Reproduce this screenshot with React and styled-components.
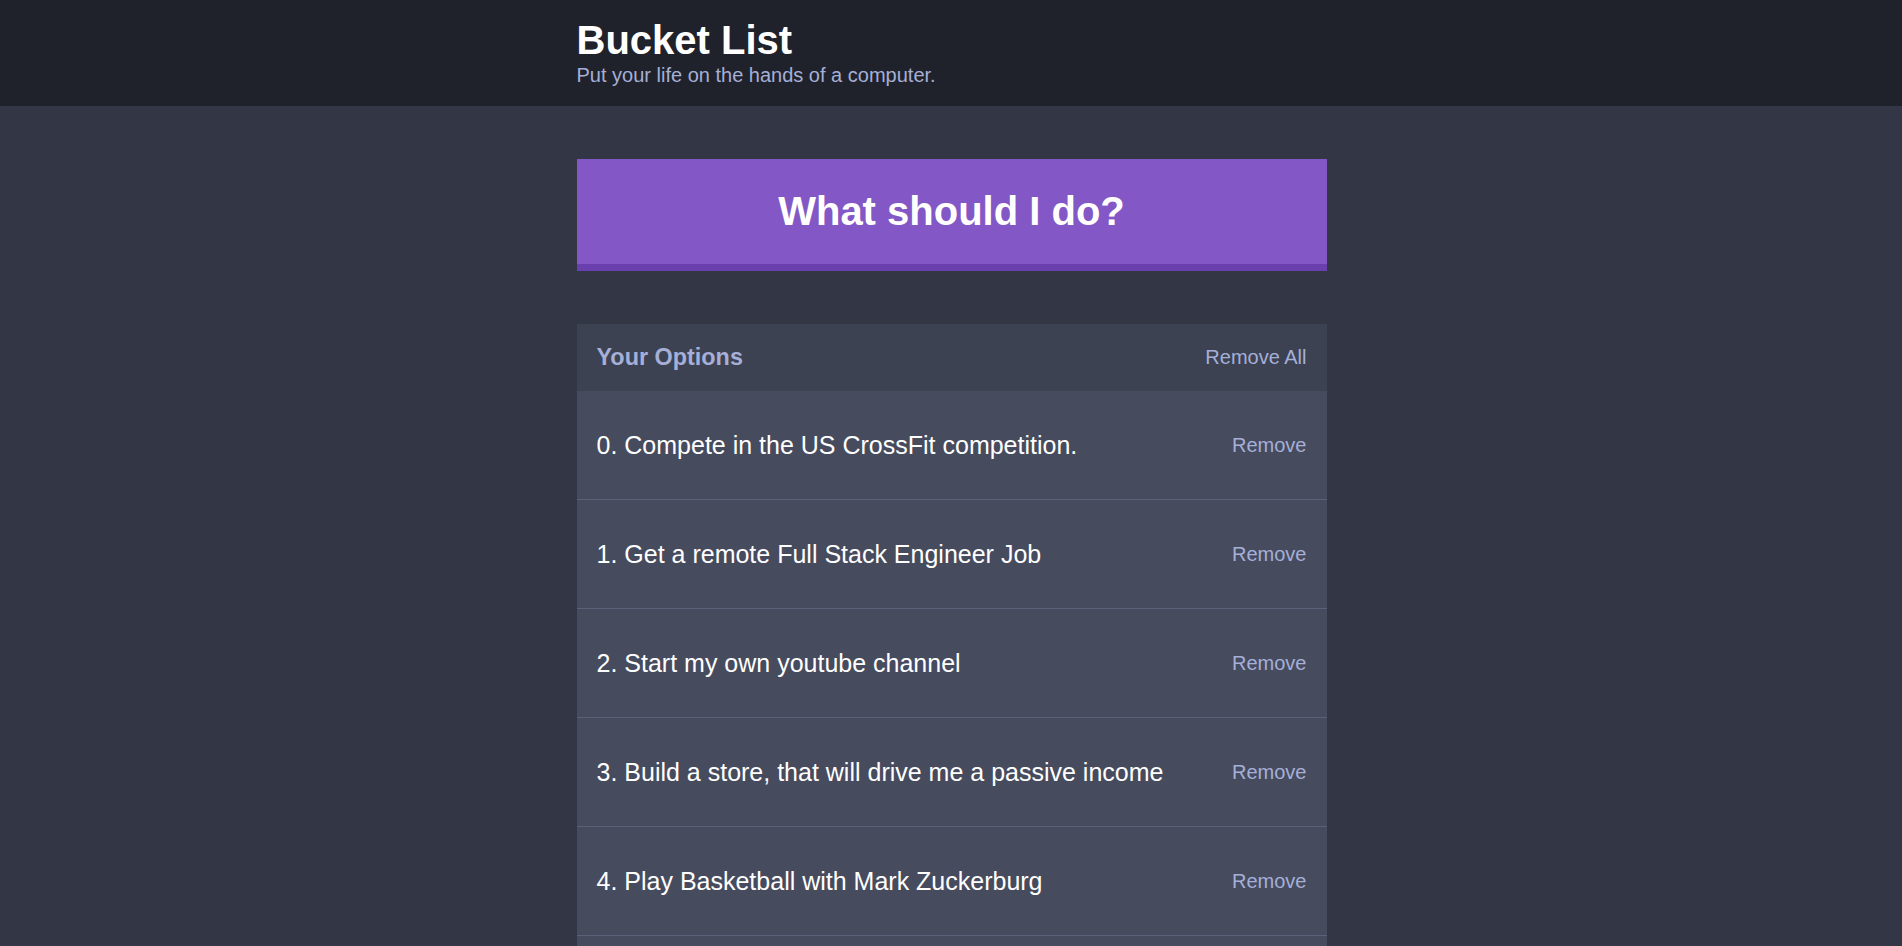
import React, { useState } from 'react';
import styled, { createGlobalStyle } from 'styled-components';

const GlobalStyle = createGlobalStyle`
  * {
    box-sizing: border-box;
  }

  body {
    margin: 0;
    background-color: #333745;
    font-family: "Liberation Sans", Arial, Helvetica, sans-serif;
    color: #fff;
  }
`;

const Container = styled.div`
  max-width: 750px;
  margin: 0 auto;
  padding-left: 1px;
  box-sizing: content-box;
`;

const Header = styled.header`
  background-color: #20222b;
  padding: 16px 0 19px;
  margin-bottom: 53px;
`;

const Title = styled.h1`
  margin: 0;
  font-size: 40px;
  line-height: 48px;
  font-weight: bold;
  color: #fff;
`;

const Subtitle = styled.h2`
  margin: 0;
  font-size: 20px;
  font-weight: normal;
  color: #a5afd7;
`;

const BigButton = styled.button`
  display: block;
  width: 100%;
  margin-bottom: 53px;
  padding: 30px;
  border: none;
  border-bottom: 7px solid #6a3fae;
  background-color: #8357c5;
  color: #fff;
  font-family: inherit;
  font-size: 40px;
  font-weight: bold;
  cursor: pointer;
`;

const Widget = styled.div`
  background-color: #464b5e;
  margin-bottom: 53px;
`;

const WidgetHeader = styled.div`
  display: flex;
  align-items: center;
  justify-content: space-between;
  padding: 20px;
  background-color: #3c4251;
`;

const WidgetTitle = styled.h3`
  margin: 0;
  font-size: 23.4px;
  font-weight: bold;
  color: #a5afd7;
`;

const LinkButton = styled.button`
  background: none;
  border: none;
  padding: 0;
  color: #a5afd7;
  font-family: inherit;
  font-size: 20px;
  cursor: pointer;
`;

const OptionRow = styled.div`
  display: flex;
  align-items: center;
  justify-content: space-between;
  padding: 39.5px 20px;
  border-bottom: 1px solid #5b6179;
`;

const OptionText = styled.p`
  margin: 0;
  font-size: 25px;
  color: #fff;
`;

const initialOptions = [
  'Compete in the US CrossFit competition.',
  'Get a remote Full Stack Engineer Job',
  'Start my own youtube channel',
  'Build a store, that will drive me a passive income',
  'Play Basketball with Mark Zuckerburg',
  'Travel around the world',
];

const App = () => {
  const [options, setOptions] = useState(initialOptions);

  const handleRemove = (text) => {
    setOptions((prev) => prev.filter((option) => option !== text));
  };

  return (
    <>
      <GlobalStyle />
      <Header>
        <Container>
          <Title>Bucket List</Title>
          <Subtitle>Put your life on the hands of a computer.</Subtitle>
        </Container>
      </Header>
      <Container>
        <BigButton disabled={options.length === 0}>What should I do?</BigButton>
        <Widget>
          <WidgetHeader>
            <WidgetTitle>Your Options</WidgetTitle>
            <LinkButton onClick={() => setOptions([])}>Remove All</LinkButton>
          </WidgetHeader>
          {options.map((option, index) => (
            <OptionRow key={option}>
              <OptionText>{index}. {option}</OptionText>
              <LinkButton onClick={() => handleRemove(option)}>Remove</LinkButton>
            </OptionRow>
          ))}
        </Widget>
      </Container>
    </>
  );
};

export default App;
